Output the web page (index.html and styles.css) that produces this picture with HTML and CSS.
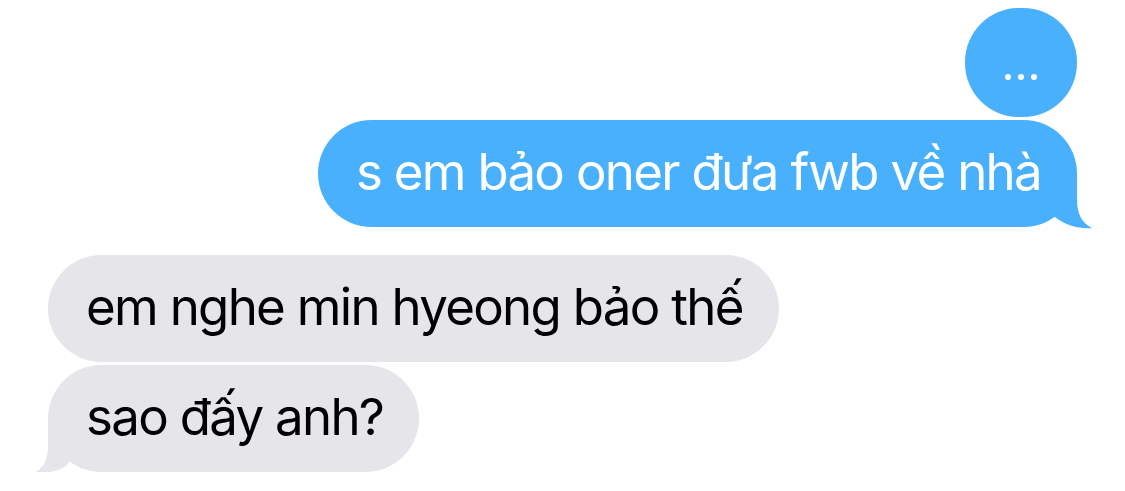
FILE: index.html
```html
<!DOCTYPE html>
<html lang="vi">
<head>
<meta charset="utf-8">
<link rel="stylesheet" href="styles.css">
</head>
<body>
<div class="chat">
  <div class="row out">
    <div class="bubble blue typing"><span class="dot"></span><span class="dot"></span><span class="dot"></span></div>
  </div>
  <div class="row out gap-s">
    <div class="bubble blue msg">s em bảo oner đưa fwb về nhà<svg class="tail tail-right" width="65" height="66" viewBox="0 0 65 66"><path d="M47,9 L47,35 C47,49 52,58 62,63 C50,64 36,61 25,52 L10,35 Z"/></svg></div>
  </div>
  <div class="row in gap-l">
    <div class="bubble gray msg">em nghe min hyeong bảo thế</div>
  </div>
  <div class="row in gap-s">
    <div class="bubble gray msg">sao đấy anh?<svg class="tail tail-left" width="65" height="68" viewBox="0 0 65 68"><path d="M18,10 L18,36 C18,50 14,59 4,64 C16,65 28,62 36,57 L50,40 Z"/></svg></div>
  </div>
</div>
</body>
</html>
```

FILE: styles.css
```css
html, body {
  margin: 0;
  padding: 0;
  background: #ffffff;
}
.chat {
  display: flex;
  flex-direction: column;
  padding: 8px 48px 0 48px;
  font-family: Inter, "Liberation Sans", Arial, sans-serif;
}
.row {
  display: flex;
}
.row.out { justify-content: flex-end; }
.row.in { justify-content: flex-start; }
.gap-s { margin-top: 3px; }
.gap-l { margin-top: 28px; }
.bubble {
  position: relative;
  box-sizing: border-box;
  height: 107px;
  border-radius: 54px;
  display: flex;
  align-items: center;
  white-space: nowrap;
}
.blue { background: #48b0fd; color: #ffffff; }
.blue .tail path { fill: #48b0fd; }
.gray { background: #e5e5ea; color: #000000; }
.gray .tail path { fill: #e5e5ea; }
.msg {
  padding: 0 36px 4px 38px;
  font-size: 51px;
  letter-spacing: -1.7px;
}
.typing {
  width: 112px;
  height: 109px;
  justify-content: center;
  gap: 7px;
  padding-top: 28px;
}
.dot {
  width: 6px;
  height: 6px;
  border-radius: 50%;
  background: #ffffff;
}
.tail {
  position: absolute;
}
.tail-right {
  right: -18px;
  bottom: -4px;
}
.tail-left {
  left: -18px;
  bottom: -5px;
}
```
